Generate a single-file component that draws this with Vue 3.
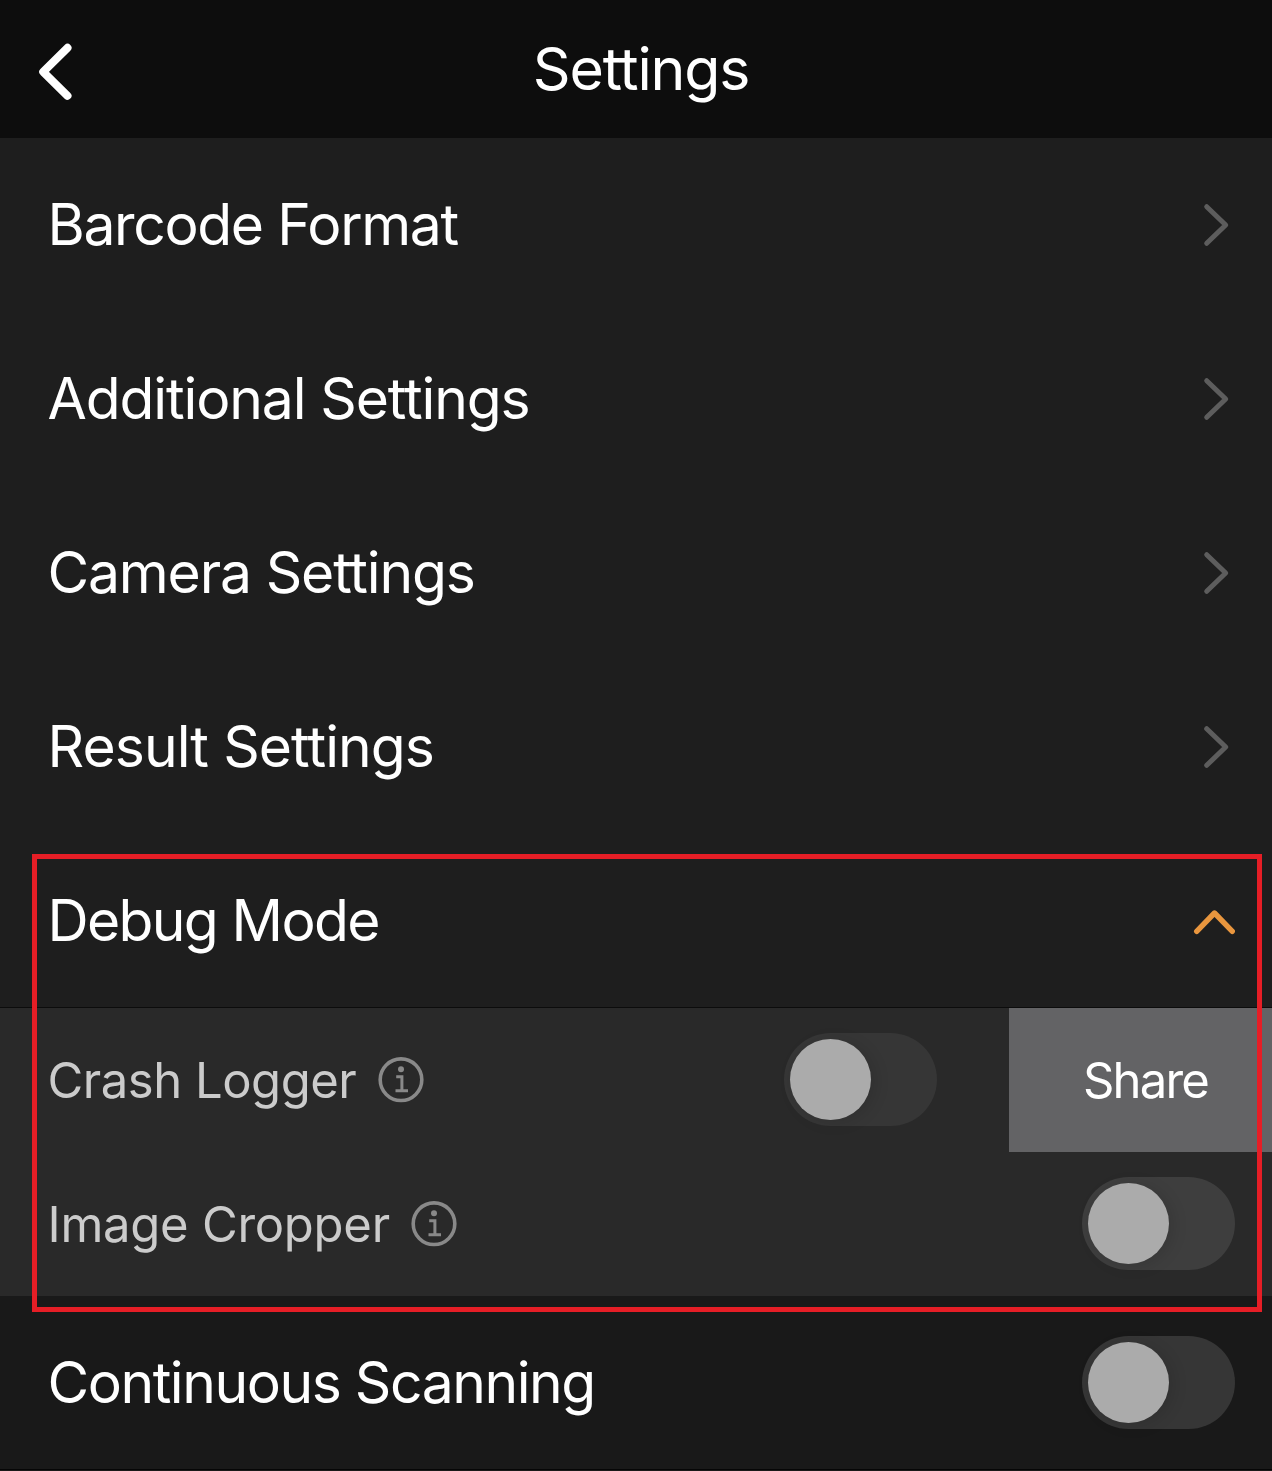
<script setup>
import { ref } from 'vue'

const links = [
  { label: 'Barcode Format', tracking: -1.36 },
  { label: 'Additional Settings', tracking: -1.12 },
  { label: 'Camera Settings', tracking: -1.16 },
  { label: 'Result Settings', tracking: -0.93 },
]
const options = ref([
  { label: 'Crash Logger', on: false, share: true, tracking: -0.48 },
  { label: 'Image Cropper', on: false, share: false, tracking: -0.27 },
])
const continuous = ref(false)
</script>

<template>
  <main class="screen">
    <header class="bar">
      <svg class="back" width="34" height="58" viewBox="0 0 34 58"><path d="M29.5 4.8 L5.2 28.8 L29.5 52.8" /></svg>
      <h1>Settings</h1>
    </header>

    <nav>
      <div v-for="l in links" :key="l.label" class="row">
        <span class="label" :style="{ letterSpacing: l.tracking + 'px' }">{{ l.label }}</span>
        <svg class="next" width="28" height="44" viewBox="0 0 28 44"><path d="M4.7 3.7 L23.7 22 L4.7 40.3" /></svg>
      </div>
    </nav>

    <section class="debug">
      <div class="row head">
        <span class="label">Debug Mode</span>
        <svg class="up" width="42" height="26" viewBox="0 0 42 26"><path d="M3.7 22.3 L21.5 4 L39.3 22.3" /></svg>
      </div>
      <div v-for="o in options" :key="o.label" class="sub" :class="{ shared: o.share }">
        <span class="label" :style="{ letterSpacing: o.tracking + 'px' }">{{ o.label }}</span>
        <svg class="info" width="46" height="46" viewBox="0 0 46 46">
          <circle class="ring" cx="23" cy="22.7" r="20.8" />
          <circle class="dot" cx="23" cy="12.3" r="3" />
          <path d="M18.2 19.8 H23.9 V33.6 M17.5 33.8 H30" />
        </svg>
        <span class="toggle" role="switch" :aria-checked="o.on" @click="o.on = !o.on"><i></i></span>
        <button v-if="o.share" class="share">Share</button>
      </div>
      <div class="highlight"></div>
    </section>

    <div class="row last">
      <span class="label">Continuous Scanning</span>
      <span class="toggle" role="switch" :aria-checked="continuous" @click="continuous = !continuous"><i></i></span>
    </div>
  </main>
</template>

<style>
body { margin: 0; background: #191919; }
</style>

<style scoped>
.screen {
  width: 1272px;
  height: 1471px;
  overflow: hidden;
  background: #191919;
  color: #fff;
  font: 57px/70px Inter, "Liberation Sans", sans-serif;
}
svg { flex: none; fill: none; stroke-linecap: round; stroke-linejoin: round; }
.bar {
  display: grid;
  grid-template-columns: 200px 1fr 200px;
  align-items: center;
  box-sizing: border-box;
  height: 138px;
  background: #0d0d0d;
}
.back { margin: 5px 0 0 38px; stroke: #fff; stroke-width: 8; }
h1 {
  margin: 0 0 0 10px;
  font-size: 59px;
  font-weight: 400;
  letter-spacing: -1.2px;
  text-align: center;
}
.row {
  display: flex;
  align-items: center;
  justify-content: space-between;
  box-sizing: border-box;
  height: 174px;
  padding: 0 37px 0 47.5px;
  background: #1e1e1e;
}
.next { margin-right: 5px; stroke: #5d5d5d; stroke-width: 5; }
.debug { position: relative; }
.head { border-bottom: 1px solid #0c0c0c; }
.head .label { letter-spacing: -1.65px; }
.up { margin-top: 2px; stroke: #e9963e; stroke-width: 5.4; }
.sub {
  display: flex;
  align-items: center;
  box-sizing: border-box;
  height: 144px;
  padding: 0 37px 0 47.5px;
  background: #292929;
  color: #cbcbcb;
  font-size: 49px;
}
.sub .label { margin-top: 2px; }
.shared { padding-right: 0; }
.info { margin-left: 21.5px; stroke: #898989; stroke-width: 3.6; }
.info path { stroke-width: 3; stroke-linecap: butt; stroke-linejoin: miter; }
.info .dot { fill: #898989; stroke: none; }
.toggle {
  flex: none;
  box-sizing: border-box;
  width: 153px;
  height: 93px;
  margin-left: auto;
  padding: 6px;
  border-radius: 47px;
  background: #3e3e3e;
}
.sub .toggle { margin-top: -1px; }
.toggle i {
  display: block;
  width: 81px;
  height: 81px;
  border-radius: 50%;
  background: #ababab;
  box-shadow: 4px 2px 16px #0000001f;
}
.shared .toggle { background: #363636; }
.share {
  width: 263px;
  height: 144px;
  margin-left: 72px;
  padding: 2px 0 0 10px;
  border: 0;
  background: #636365;
  color: #fff;
  font: inherit;
  letter-spacing: -1.8px;
}
.highlight {
  position: absolute;
  top: 20px;
  left: 32px;
  box-sizing: border-box;
  width: 1230px;
  height: 458px;
  border: 5px solid #e61e26;
  pointer-events: none;
}
.last { border-bottom: 1px solid #060606; background: #191919; }
.last .label { letter-spacing: -1.45px; }
.last .toggle { background: #363636; }
</style>
